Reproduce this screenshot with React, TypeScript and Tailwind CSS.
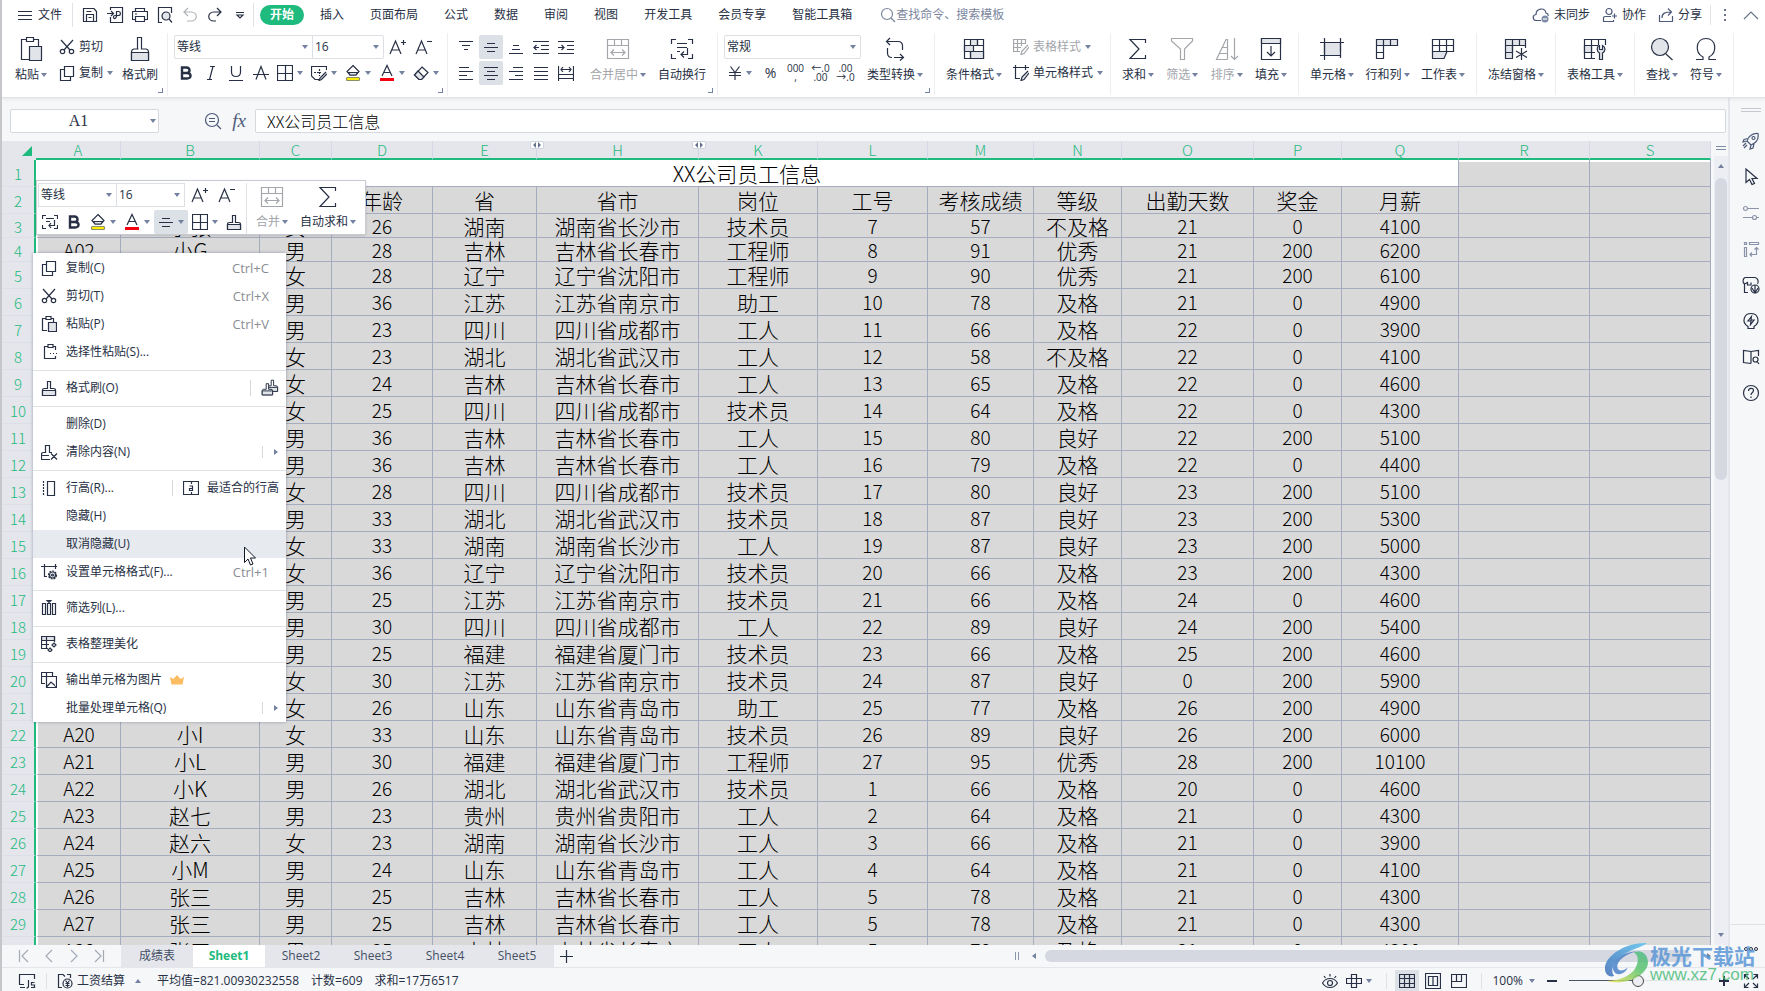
import type { ReactNode } from 'react';
import clsx from 'clsx';

const SHADE = '#e1e4e9';

type Glyph = { w: number; h: number; d: ReactNode };

const brush = (
  <>
    <path d="M6.5 8.5H3.5Q1.5 8.5 1.5 10.5V15.5H14.5V10.5Q14.5 8.5 12.5 8.5H9.5V1.5H6.5Z" fill="#fff" />
    <path d="M1.5 10.5H14.5V15.5H1.5Z" fill={SHADE} />
  </>
);

const glyphs: Record<string, Glyph> = {
  menu: { w: 14, h: 16, d: <path d="M0 4.5H14M0 8.5H14M0 12.5H14" /> },
  save: { w: 16, h: 16, d: <path d="M1.5 1.5H12L14.5 4.5V14.5H1.5ZM4.5 14.5V7.5H11.5V14.5M4.5 4.5H9.5M6.5 10.5H9.5" /> },
  pdf: { w: 18, h: 16, d: <path d="M4.5 3V.5H16.5V15.5H4.5V10M1 6.5H7M5 4L7.5 6.5L5 9M10.5 10V4.5H12.5C15 4.5 15 8.5 12.5 8.5H9C7 8.5 7 12 9 11.5C10 11 10.5 10 10.5 8" /> },
  print: { w: 16, h: 16, d: <path d="M3.5 4.5V1.5H12.5V4.5M3.5 12.5H.5V4.5H15.5V12.5H12.5M3.5 9.5H12.5V14.5H3.5ZM3 7H5" /> },
  preview: { w: 16, h: 16, d: <><path d="M5 15.5H1.5V.5H14.5V6" /><circle cx="9" cy="9" r="4" fill={SHADE} /><path d="M12 12L15 15.5" /></> },
  undo: { w: 16, h: 16, d: <path d="M6 1L2 5L6 9M2 5H9C16 5 16 14 9 14H5" /> },
  redo: { w: 16, h: 16, d: <path d="M10 1L14 5L10 9M14 5H7C0 5 0 14 7 14H9" /> },
  more: { w: 10, h: 10, d: <path d="M1 2.5H9M2 5L5 8L8 5Z" /> },
  search: { w: 16, h: 16, d: <><circle cx="7" cy="7" r="5.5" /><path d="M11 11L15 15" /></> },
  cloud: { w: 18, h: 16, d: <><path d="M9 13.5H4.5C.5 13.5 0 8 4 7.5C4 1 13 0 14 6C16 6.5 16.5 8 16 9" /><circle cx="13" cy="12" r="3.5" fill="#7e8ba6" stroke="none" /><path d="M11 12H15" stroke="#fff" /></> },
  people: { w: 16, h: 16, d: <><circle cx="7" cy="4.5" r="3" /><path d="M9 9.5H3.5Q1.5 9.5 1.5 11.5V14.5H11.5V13M12.5 6.5V11.5M10 9H15" /></> },
  share: { w: 16, h: 16, d: <path d="M1.5 8V14.5H14.5V9M4 11C4 6 7 5 13.5 5M10 1.5L13.5 5L10 8.5" /> },
  dots: { w: 4, h: 14, d: <path d="M2 1V3M2 6V8M2 11V13" strokeWidth="2" /> },
  collapse: { w: 16, h: 10, d: <path d="M1 9L8 2L15 9" /> },
  paste: { w: 24, h: 26, d: <><path d="M8 3.5H2.5V23.5H10M15 3.5H19.5V10M7.5 1.5H14.5V5.5H7.5Z" /><path d="M10.5 10.5H22.5V24.5H10.5Z" fill={SHADE} /></> },
  cut: { w: 16, h: 16, d: <><circle cx="3.5" cy="12.5" r="2.2" /><circle cx="12.5" cy="12.5" r="2.2" /><path d="M2 1L11 11M14 1L5 11" /></> },
  copy: { w: 16, h: 16, d: <path d="M6 4.5H1.5V15.5H11.5V11.5M5.5 1.5H14.5V11.5H5.5Z" /> },
  brushBig: { w: 20, h: 26, d: <><path d="M8.5 13H4Q1.5 13.5 1.5 16V24.5H18.5V16Q18.5 13.5 16 13H11.5V1.5H7.5V13" /><path d="M1.5 16.5H18.5V24.5H1.5Z" fill={SHADE} /></> },
  grow: { w: 18, h: 18, d: <path d="M1 16L6.5 3L12 16M3 12H10.5M12 4.5H17M14.5 2V7" /> },
  shrink: { w: 18, h: 18, d: <path d="M1 16L6.5 3L12 16M3 12H10.5M12 3.5H17" /> },
  bold: { w: 16, h: 16, d: <path d="M4 2.5V13.5H9C14 13.5 13.5 8 9 8H4H8.5C12.5 8 12.5 2.5 8.5 2.5Z" strokeWidth="2.4" /> },
  italic: { w: 16, h: 16, d: <path d="M7 1.5H12M4 14.5H9M10 1.5L6.5 14.5" /> },
  underline: { w: 16, h: 16, d: <path d="M3.5 1V7C3.5 13 12.5 13 12.5 7V1M1 15.5H15" /> },
  strike: { w: 16, h: 16, d: <path d="M3 14.5L8 1.5L13 14.5M0 9.5H16" /> },
  borders: { w: 16, h: 16, d: <path d="M.5 .5H15.5V15.5H.5ZM8.5 .5V15.5M.5 8.5H15.5" /> },
  drawBorder: { w: 16, h: 16, d: <><path d="M9 14.5H4L.5 11V1.5H15.5V5" /><path d="M8.5 4V11M3 7.5H10" strokeDasharray="2 1" /><path d="M15 7L9 13L8 15.5L10.5 14.5L16 9" fill={SHADE} /></> },
  fill: { w: 16, h: 18, d: <><path d="M8 1.5L14 7.5L11 11H5L2 7.5Z" /><path d="M3.5 8.5H12.5L11 11H5Z" fill={SHADE} /><rect x="1.5" y="13.5" width="13" height="3" rx="1" fill="#ffee00" stroke="#8c8f66" /></> },
  fontColor: { w: 16, h: 18, d: <><path d="M3 12L8 1.5L13 12M5 8.5H11" /><path d="M1 15.5H15" stroke="#f5000f" strokeWidth="3" /></> },
  eraser: { w: 16, h: 16, d: <><path d="M9 2L15 7.5L8.5 14.5H6L1.5 10Z" /><path d="M5 6L11 12L8.5 14.5H6L1.5 10Z" fill={SHADE} /></> },
  alignTop: { w: 16, h: 16, d: <path d="M1 2.5H15M4 6.5H12M6 10.5H10" /> },
  alignMid: { w: 16, h: 16, d: <path d="M4 4.5H12M1 8.5H15M4 12.5H12" /> },
  alignBot: { w: 16, h: 16, d: <path d="M5 6.5H11M4 10.5H12M1 14.5H15" /> },
  outdent: { w: 16, h: 16, d: <path d="M0 2.5H16M8 6.5H16M8 10.5H16M0 14.5H16M6 8.5H1M3.5 6L1 8.5L3.5 11" /> },
  indent: { w: 16, h: 16, d: <path d="M0 2.5H16M9 6.5H16M9 10.5H16M0 14.5H16M0 8.5H6M3.5 6L6 8.5L3.5 11" /> },
  left: { w: 16, h: 16, d: <path d="M1 2.5H11M1 6.5H15M1 10.5H9M1 14.5H15" /> },
  center: { w: 16, h: 16, d: <path d="M1 2.5H15M4 6.5H12M1 10.5H15M4 14.5H12" /> },
  right: { w: 16, h: 16, d: <path d="M5 2.5H15M1 6.5H15M7 10.5H15M1 14.5H15" /> },
  justify: { w: 16, h: 16, d: <path d="M1 2.5H15M1 6.5H15M1 10.5H15M1 14.5H15" /> },
  distribute: { w: 16, h: 16, d: <path d="M.5 1V16M15.5 1V16M3 4.5H13M5 2L3 4.5L5 7M11 2L13 4.5L11 7M1 9.5H15M1 13.5H15" /> },
  merge: { w: 24, h: 22, d: <path d="M1.5 1.5H22.5V20.5H1.5ZM1.5 7.5H22.5M8.5 1.5V7.5M15.5 1.5V7.5M5 14.5H19M8 11.5L5 14.5L8 17.5M16 11.5L19 14.5L16 17.5" /> },
  wrap: { w: 24, h: 22, d: <path d="M6 1.5H1.5V6M18 1.5H22.5V6M6 20.5H1.5V16M18 20.5H22.5V16M7 5.5H17M7 9.5H17M7 13.5H10M17.5 10V16.5H11M14 13.5L11 16.5L14 19.5" /> },
  wrapSmall: { w: 16, h: 16, d: <path d="M4 1.5H.5V5M12 1.5H15.5V5M4 14.5H.5V11M12 14.5H15.5V11M4 4.5H12M4 7.5H8M12.5 6V11.5H7M9 9L7 11.5L9 14" /> },
  yen: { w: 14, h: 16, d: <path d="M2.5 1.5L7 7.5L11.5 1.5M1 7.5H13M1 10.5H13M7 7.5V15" /> },
  convert: { w: 20, h: 24, d: <path d="M7 20.5Q2.5 20.5 2.5 16V11M5 1L1.5 4.5L5 8M1.5 4.5H13Q17.5 4.5 17.5 9V13M15 17L18.5 20.5L15 23.5M18.5 20.5H9" /> },
  condition: { w: 22, h: 22, d: <><path d="M1.5 1.5H20.5V20.5H1.5Z" /><path d="M7.5 1.5H14.5V7.5H7.5ZM1.5 7.5H10.5V13.5H1.5ZM7.5 13.5H20.5V20.5H7.5Z" fill={SHADE} /><path d="M1.5 7.5H20.5M1.5 13.5H20.5M7.5 13.5V20.5M14.5 1.5V7.5" /></> },
  tableStyle: { w: 16, h: 16, d: <path d="M7 12.5H.5V.5H12.5V5M.5 4.5H12.5M.5 8.5H8M4.5 .5V12.5M8.5 .5V7M15 6L9 12L8 15.5L11 14.5L16 8" /> },
  cellStyle: { w: 16, h: 16, d: <><path d="M2.5 0V13.5H7M0 2.5H16M12.5 0V5" /><path d="M15 6L9 12L8 15.5L11 14.5L16 8" fill={SHADE} /></> },
  sum: { w: 20, h: 22, d: <path d="M17.5 5V1.5H2L11 11L2 20.5H17.5V17" /> },
  filter: { w: 24, h: 24, d: <path d="M1.5 1.5H22.5V4L14.5 12V22.5H10.5V12L1.5 4Z" /> },
  sort: { w: 24, h: 24, d: <path d="M12.5 22.5H1.5L11 2.5H12.5V22.5M4 16.5H12M7 10.5H12M19.5 1V22.5M16 19L19.5 22.5L23 19" /> },
  fillDown: { w: 22, h: 24, d: <><path d="M1.5 1.5H20.5V22.5H1.5Z" /><path d="M1.5 1.5H20.5V6.5H1.5Z" fill={SHADE} /><path d="M11 9V19M7 15L11 19L15 15" /></> },
  cell: { w: 24, h: 22, d: <><path d="M4.5 4.5H20.5V17.5H4.5Z" fill={SHADE} /><path d="M4.5 0V22M20.5 0V14M20.5 17V20M0 4.5H24M0 17.5H17" /></> },
  rowCol: { w: 24, h: 22, d: <><path d="M1.5 1.5H22.5V7.5H1.5Z" fill={SHADE} /><path d="M1.5 7.5V20.5H8.5V1.5M15.5 1.5V7.5M1.5 14.5H8.5" /></> },
  sheet: { w: 24, h: 22, d: <><path d="M1.5 1.5H22.5V13.5H1.5ZM1.5 7.5H22.5M8.5 1.5V13.5M15.5 1.5V13.5" /><path d="M1.5 13.5H16L13 20.5H1.5Z" fill={SHADE} /></> },
  freeze: { w: 24, h: 22, d: <><path d="M1.5 1.5H21.5V7.5H1.5ZM1.5 7.5H8.5V20.5H1.5Z" fill={SHADE} /><path d="M8.5 1.5V14M15.5 1.5V7.5M1.5 14.5H8.5M21.5 7.5V10M17.5 10V22M12 13L23 19.5M23 13L12 19.5" /></> },
  tools: { w: 24, h: 22, d: <><path d="M12 20.5H1.5V1.5H22.5V7M1.5 7.5H15M1.5 14.5H12M8.5 1.5V20.5M15.5 1.5V7" /><path d="M1.5 7.5H8.5V14.5H1.5Z" fill={SHADE} /><path d="M16.5 21.5V15C13 13 14 8 16.5 7.5V11.5H19.5V7.5C22.5 9 23 13 19.5 15V21.5Z" fill={SHADE} /></> },
  find: { w: 24, h: 24, d: <><circle cx="10" cy="10" r="8.5" fill={SHADE} /><path d="M16 17L22.5 23" /></> },
  omega: { w: 22, h: 24, d: <path d="M1 22.5H8V20C-1 15 1 1.5 11 1.5S23 15 14 20V22.5H21" /> },
  zoomFx: { w: 18, h: 18, d: <><circle cx="8" cy="8" r="6.5" /><path d="M13 13L17 17M5 6.5H11M5 9.5H11" /></> },
  rocket: { w: 18, h: 18, d: <><path d="M5 9C6 4 11 1 16 1.5C17 7 14 11 9 13L5 9ZM6 6.5L2 7.5L1 10L5 9M9 13L8 17L11 16L12 11.5M4 11L1 14M5 13L2 16" /><circle cx="11.5" cy="6" r="1.5" /></> },
  arrow: { w: 18, h: 18, d: <path d="M4 1V14.5L7.5 11.5L10 16.5L12.5 15.5L10 10.5H15Z" /> },
  sliders: { w: 18, h: 18, d: <><circle cx="3.5" cy="4.5" r="2" /><circle cx="12.5" cy="13.5" r="2" /><path d="M5.5 4.5H17M1 13.5H10.5M14.5 13.5H17" /></> },
  transform: { w: 18, h: 18, d: <path d="M2.5 2.5H4.5V4.5H2.5ZM7.5 2.5H16.5V4.5H7.5ZM2.5 7.5H4.5V16.5H2.5ZM14.5 7.5V14.5H8M12.5 9.5L14.5 7.5L16.5 9.5M10 12.5L8 14.5L10 16.5" /> },
  docStore: { w: 18, h: 18, d: <><path d="M6 16.5H2.5V8C0 6 1 2.5 3 1.5H13C16 2 17 6 15.5 8M2.5 8L5.5 6.5V9H9V6.5" /><circle cx="13" cy="13" r="4" /><path d="M13 9V17M13 17L10 12M13 17L16 12" /></> },
  bulb: { w: 18, h: 18, d: <path d="M6 16.5V14.5C-1 10 2 1.5 9 1.5S19 10 12 14.5V16.5ZM9.5 4.5L6 9H9L8.5 12.5L12 8H9Z" /> },
  book: { w: 18, h: 18, d: <><path d="M9 15.5L1.5 14.5V2.5L9 3.5L16.5 2.5V8M9 3.5V15.5" /><circle cx="13.5" cy="11.5" r="2.5" /><path d="M15 13.5L17 16" /></> },
  help: { w: 18, h: 18, d: <><circle cx="9" cy="9" r="7.5" /><path d="M6.5 7C6.5 3.5 11.5 3.5 11.5 6.5C11.5 8.5 9 8.5 9 11M9 12.5V14" /></> },
  pasteSmall: { w: 16, h: 16, d: <><path d="M5 2.5H1.5V14.5H6M10 2.5H12.5V6M5 .5H10V3.5H5Z" /><path d="M7.5 6.5H15.5V15.5H7.5Z" fill={SHADE} /></> },
  pasteSpecial: { w: 16, h: 16, d: <path d="M7 2.5H3.5V14.5H14.5V12M12 2.5H14.5V6M7 .5H12V3.5H7ZM9 9.5H10M12 9.5H13M15 9.5H16" /> },
  brush: { w: 16, h: 16, d: brush },
  brushes: { w: 18, h: 18, d: <><g transform="translate(5 0) scale(.8)">{brush}</g><g transform="translate(0 3.5) scale(.8)">{brush}</g></> },
  clear: { w: 17, h: 16, d: <path d="M9 15.5H.5V10.5Q.5 8.5 2.5 8.5H4.5V1.5H8.5V8.5H11M.5 11.5H8M10 9.5L16 15.5M16 9.5L10 15.5" /> },
  rowHeight: { w: 16, h: 16, d: <><path d="M6.5 1.5H13.5V15.5H6.5Z" /><path d="M2.5 1V16" strokeDasharray="2 1" /></> },
  fitHeight: { w: 16, h: 16, d: <path d="M.5 1.5H15.5V14.5H.5ZM8.5 1.5V4M8.5 12V14.5M6.5 6H9.5V10.5H6.5V8.5H9.5" /> },
  cellFormat: { w: 17, h: 16, d: <><path d="M3.5 0V12.5H6M0 2.5H16M14.5 0V5" /><circle cx="11.5" cy="11" r="4" strokeDasharray="2 1" /><circle cx="11.5" cy="11" r="3" /><circle cx="11.5" cy="11" r="1" /></> },
  filterCol: { w: 16, h: 16, d: <path d="M1.5 3.5H4.5V14.5H1.5ZM6.5 3.5H9.5V14.5H6.5ZM11.5 3.5H14.5V14.5H11.5ZM6 .5H10L8 2.5Z" /> },
  beautify: { w: 16, h: 16, d: <><path d="M.5 .5H13.5V4.5H.5Z" fill={SHADE} /><path d="M7 12.5H.5V.5H13.5V6M.5 8.5H8M5.5 1V12M13 7L15 9L13 11L11 9ZM9 12L11 14L9 16L7 14Z" /></> },
  exportImg: { w: 16, h: 16, d: <><path d="M4 11.5H.5V.5H11.5V4M.5 4.5H5M5.5 .5V4" /><path d="M5.5 4.5H15.5V15.5H5.5ZM5.5 15L10 10L15.5 15" /></> },
  crown: { w: 14, h: 10, d: <path d="M0 2L3.5 4L7 0L10.5 4L14 2L12.5 9.5H1.5Z" fill="#fdbb62" stroke="none" /> },
  first: { w: 12, h: 14, d: <path d="M1.5 1V13M10 1L4 7L10 13" /> },
  prev: { w: 12, h: 14, d: <path d="M9 1L3 7L9 13" /> },
  next: { w: 12, h: 14, d: <path d="M3 1L9 7L3 13" /> },
  last: { w: 12, h: 14, d: <path d="M2 1L8 7L2 13M10.5 1V13" /> },
  plus: { w: 14, h: 14, d: <path d="M7.5 1V14M1 7.5H14" /> },
  macro: { w: 18, h: 16, d: <path d="M6 11.5H1.5V1.5H16.5V6M2 14.5H7M10.5 7V13Q10.5 15 8.5 15M16.5 9.5H13.5V12H16.5V14.5H13" /> },
  payroll: { w: 16, h: 16, d: <><path d="M5 14.5H1.5V1.5H6L8 3.5M10 1.5H13.5V5" /><circle cx="10.5" cy="10.5" r="4.5" /><path d="M8.5 7.5L10.5 10L12.5 7.5M8.5 10.5H12.5M8.5 12.5H12.5M10.5 10V14" /></> },
  eye: { w: 16, h: 16, d: <><path d="M.5 10C4 4 12 4 15.5 10C12 16 4 16 .5 10ZM2 3L3.5 5M8 1V3.5M14 3L12.5 5" /><circle cx="8" cy="10" r="2.5" /></> },
  cross: { w: 16, h: 16, d: <path d="M5.5 1.5H10.5V14.5H5.5ZM.5 5.5H15.5V10.5H.5Z" /> },
  viewGrid: { w: 16, h: 16, d: <path d="M.5 1.5H15.5V14.5H.5ZM.5 5.5H15.5M.5 10.5H15.5M5.5 1.5V14.5M10.5 1.5V14.5" /> },
  viewPage: { w: 16, h: 16, d: <path d="M.5 .5H15.5V15.5H.5ZM3.5 3.5H12.5V12.5H3.5ZM8 3.5V12.5" /> },
  viewBreak: { w: 16, h: 16, d: <path d="M.5 1.5H15.5V14.5H.5ZM5.5 1.5V8.5H10.5V1.5M.5 8.5H10" /> },
  fullscreen: { w: 16, h: 16, d: <path d="M10 6L14.5 1.5M10.5 1.5H14.5V5.5M6 10L1.5 14.5M1.5 10.5V14.5H5.5M6 6L1.5 1.5M1.5 5.5V1.5H5.5M10 10L14.5 14.5M10.5 14.5H14.5V10.5" /> },
};

const Icon = ({ name, className }: { name: string; className?: string }) => {
  const g = glyphs[name];
  return (
    <svg
      width={g.w}
      height={g.h}
      viewBox={`0 0 ${g.w} ${g.h}`}
      fill="none"
      stroke="currentColor"
      strokeWidth="1.2"
      aria-hidden
      className={clsx('shrink-0', className)}
    >
      {g.d}
    </svg>
  );
};

const Caret = ({ className }: { className?: string }) => (
  <svg width="6" height="4" viewBox="0 0 6 4" aria-hidden className={clsx('shrink-0', className)}>
    <path d="M0 0H6L3 4Z" fill="#7382a0" />
  </svg>
);

type ButtonProps = { icon: string; label: string; caret?: boolean; muted?: boolean };

const BigButton = ({ icon, label, caret, muted }: ButtonProps) => (
  <button type="button" className={clsx('flex shrink-0 flex-col items-center', muted && 'text-[#a3a6ab]')}>
    <span className="flex h-7 items-center">
      <Icon name={icon} />
    </span>
    <span className="flex h-6 items-center gap-0.5 whitespace-nowrap">
      {label}
      {caret && <Caret />}
    </span>
  </button>
);

const SmallButton = ({ icon, label, caret, muted }: ButtonProps) => (
  <button type="button" className={clsx('flex h-6 items-center gap-1 whitespace-nowrap', muted && 'text-[#a3a6ab]')}>
    <Icon name={icon} />
    {label}
    {caret && <Caret />}
  </button>
);

const ToolButton = ({ icon, label, caret, on }: { icon: string; label: string; caret?: boolean; on?: boolean }) => (
  <button
    type="button"
    aria-label={label}
    className={clsx(
      'flex h-6 shrink-0 items-center rounded-xs',
      caret ? 'w-[34px] gap-1 pl-1' : 'w-6 justify-center',
      on && 'bg-[#dce1e7]',
    )}
  >
    <Icon name={icon} />
    {caret && <Caret />}
  </button>
);

const Picker = ({ value, label, className }: { value: string; label: string; className: string }) => (
  <span className={clsx('relative flex h-6 items-center', className)}>
    <select aria-label={label} defaultValue={value} className="h-full w-full appearance-none bg-transparent pl-0.5 outline-none">
      <option>{value}</option>
    </select>
    <Caret className="pointer-events-none absolute right-1" />
  </span>
);

const Group = ({ children, className, corner }: { children: ReactNode; className: string; corner?: boolean }) => (
  <div className={clsx('relative flex h-[62px] shrink-0 border-r border-[#eceef1] pt-0.5', className)}>
    {children}
    {corner && <span className="absolute right-1 bottom-0.5 size-[5px] border-r border-b border-[#7382a0]" />}
  </div>
);

const TopBar = () => (
  <header className="flex h-[29px] items-center pl-4">
    <button type="button" className="flex items-center gap-1.5">
      <Icon name="menu" />
      文件
    </button>
    <span className="mr-1 ml-2.5 h-6 w-px bg-[#dfe2e6]" />
    {[
      ['save', '保存'],
      ['pdf', '输出为PDF'],
      ['print', '打印'],
      ['preview', '打印预览'],
      ['undo', '撤销'],
      ['redo', '恢复'],
      ['more', '自定义快速访问工具栏'],
    ].map(([icon, label]) => (
      <button key={icon} type="button" aria-label={label} className={clsx('flex w-[25px] justify-center', icon === 'undo' && 'text-[#b0b3b8]')}>
        <Icon name={icon} />
      </button>
    ))}
    <span className="mr-1.5 ml-px h-6 w-px bg-[#dfe2e6]" />
    <button type="button" className="h-5 rounded-full bg-[#1fba7e] px-2.5 font-bold text-white">开始</button>
    <nav className="flex gap-[26px] pl-4 whitespace-nowrap">
      {['插入', '页面布局', '公式', '数据', '审阅', '视图', '开发工具', '会员专享', '智能工具箱'].map(tab => (
        <button key={tab} type="button">{tab}</button>
      ))}
    </nav>
    <label className="ml-7 flex items-center text-[#7b869e]">
      <Icon name="search" />
      <input aria-label="查找命令" placeholder="查找命令、搜索模板" className="w-32 outline-none placeholder:text-[#7b869e]" />
    </label>
    <div className="ml-auto flex items-center gap-3 pr-1.5 whitespace-nowrap">
      <button type="button" className="flex items-center gap-1">
        <Icon name="cloud" className="text-[#4c5a78]" />
        未同步
      </button>
      <button type="button" className="flex items-center gap-1">
        <Icon name="people" className="text-[#4c5a78]" />
        协作
      </button>
      <button type="button" className="flex items-center gap-1">
        <Icon name="share" className="text-[#4c5a78]" />
        分享
      </button>
      <span className="-ml-1 h-5 w-px bg-[#dfe2e6]" />
      <button type="button" aria-label="更多" className="text-[#6b7488]"><Icon name="dots" /></button>
      <button type="button" aria-label="折叠功能区" className="pl-1 text-[#6b7488]"><Icon name="collapse" /></button>
    </div>
  </header>
);

const decimalButton = (label: string, top: string, bottom: string) => (
  <button
    type="button"
    aria-label={label}
    className="flex h-6 w-[25px] flex-col items-center justify-center text-[10px] leading-[9px]"
  >
    <span>{top}</span>
    <span>{bottom}</span>
  </button>
);

const Ribbon = () => (
  <div className="flex pt-1 pb-0.5">
    <Group className="w-[166px] gap-2 pl-[13px]" corner>
      <BigButton icon="paste" label="粘贴" caret />
      <div className="ml-1 flex w-[55px] flex-col gap-0.5">
        <SmallButton icon="cut" label="剪切" />
        <SmallButton icon="copy" label="复制" caret />
      </div>
      <BigButton icon="brushBig" label="格式刷" />
    </Group>
    <Group className="w-[280px] flex-col gap-0.5 pl-1.5" corner>
      <div className="flex gap-0.5">
        <div className="flex rounded-xs border border-[#dcdfe4]">
          <Picker label="字体" value="等线" className="-my-px w-[138px] border-r border-[#dcdfe4]" />
          <Picker label="字号" value="16" className="-my-px w-[70px]" />
        </div>
        <ToolButton icon="grow" label="增大字号" />
        <ToolButton icon="shrink" label="减小字号" />
      </div>
      <div className="flex">
        <div className="flex gap-px">
          <ToolButton icon="bold" label="加粗" />
          <ToolButton icon="italic" label="倾斜" />
          <ToolButton icon="underline" label="下划线" />
          <ToolButton icon="strike" label="删除线" />
        </div>
        <ToolButton icon="borders" label="边框" caret />
        <ToolButton icon="drawBorder" label="绘图边框" caret />
        <ToolButton icon="fill" label="填充颜色" caret />
        <ToolButton icon="fontColor" label="字体颜色" caret />
        <ToolButton icon="eraser" label="清除" caret />
      </div>
    </Group>
    <Group className="w-[270px] gap-3 pl-1.5" corner>
      <div className="flex flex-col gap-0.5">
        <div className="flex gap-px">
          <ToolButton icon="alignTop" label="顶端对齐" />
          <ToolButton icon="alignMid" label="垂直居中" on />
          <ToolButton icon="alignBot" label="底端对齐" />
          <ToolButton icon="outdent" label="减少缩进" />
          <ToolButton icon="indent" label="增加缩进" />
        </div>
        <div className="flex gap-px">
          <ToolButton icon="left" label="左对齐" />
          <ToolButton icon="center" label="水平居中" on />
          <ToolButton icon="right" label="右对齐" />
          <ToolButton icon="justify" label="两端对齐" />
          <ToolButton icon="distribute" label="分散对齐" />
        </div>
      </div>
      <BigButton icon="merge" label="合并居中" caret muted />
      <BigButton icon="wrap" label="自动换行" />
    </Group>
    <Group className="w-[217px] gap-1.5 pl-1.5" corner>
      <div className="flex flex-col gap-0.5">
        <Picker label="数字格式" value="常规" className="w-[137px] rounded-xs border border-[#dcdfe4]" />
        <div className="flex">
          <ToolButton icon="yen" label="货币" caret />
          <button type="button" aria-label="百分比" className="h-6 w-[25px] text-sm">%</button>
          {decimalButton('千位分隔', '000', ',')}
          {decimalButton('增加小数位', '←.0', '.00')}
          {decimalButton('减少小数位', '.00', '→.0')}
        </div>
      </div>
      <BigButton icon="convert" label="类型转换" caret />
    </Group>
    <Group className="w-[176px] gap-[11px] pl-[11px]">
      <BigButton icon="condition" label="条件格式" caret />
      <div className="flex flex-col gap-0.5">
        <SmallButton icon="tableStyle" label="表格样式" caret muted />
        <SmallButton icon="cellStyle" label="单元格样式" caret />
      </div>
    </Group>
    <Group className="w-[188px] justify-between px-[11px]">
      <BigButton icon="sum" label="求和" caret />
      <BigButton icon="filter" label="筛选" caret muted />
      <BigButton icon="sort" label="排序" caret muted />
      <BigButton icon="fillDown" label="填充" caret />
    </Group>
    <Group className="w-[178px] justify-between px-[11px]">
      <BigButton icon="cell" label="单元格" caret />
      <BigButton icon="rowCol" label="行和列" caret />
      <BigButton icon="sheet" label="工作表" caret />
    </Group>
    <Group className="w-[79px] px-[11px]">
      <BigButton icon="freeze" label="冻结窗格" caret />
    </Group>
    <Group className="w-[79px] px-[11px]">
      <BigButton icon="tools" label="表格工具" caret />
    </Group>
    <Group className="w-[99px] justify-between px-[11px]">
      <BigButton icon="find" label="查找" caret />
      <BigButton icon="omega" label="符号" caret />
    </Group>
  </div>
);

const FormulaBar = () => (
  <div className="flex h-[43px] shrink-0 items-center pt-[3px] pr-0.5 pl-2">
    <div className="relative flex h-6 w-[149px] items-center rounded-xs border border-[#d5d8dd] bg-white">
      <input aria-label="名称框" defaultValue="A1" className="w-full pr-3 text-center font-['Liberation_Serif',serif] text-[16px] outline-none" />
      <Caret className="absolute right-0.5" />
    </div>
    <button type="button" aria-label="查看公式" className="ml-[45px] text-[#4c5a78]"><Icon name="zoomFx" /></button>
    <button type="button" aria-label="插入函数" className="ml-2 w-[18px] font-['Liberation_Serif',serif] text-[19px] leading-6 text-[#4c5a78] italic">fx</button>
    <input
      aria-label="编辑栏"
      defaultValue="XX公司员工信息"
      className="ml-[7px] h-6 flex-1 rounded-xs border border-[#d5d8dd] bg-white pl-[11px] font-['Noto_Sans_CJK_SC',sans-serif] text-[16px] font-light text-black outline-none"
    />
  </div>
);

const columns = [
  { id: 'A', w: 'w-[85px]' },
  { id: 'B', w: 'w-[139px]' },
  { id: 'C', w: 'w-[72px]' },
  { id: 'D', w: 'w-[101px]' },
  { id: 'E', w: 'w-[104px]', hidden: true },
  { id: 'H', w: 'w-[162px]', hidden: true },
  { id: 'K', w: 'w-[119px]' },
  { id: 'L', w: 'w-[110px]' },
  { id: 'M', w: 'w-[106px]' },
  { id: 'N', w: 'w-[88px]' },
  { id: 'O', w: 'w-[132px]' },
  { id: 'P', w: 'w-[88px]' },
  { id: 'Q', w: 'w-[117px]' },
  { id: 'R', w: 'w-[131px]' },
  { id: 'S', w: '' },
];

const titles = ['编号', '姓名', '性别', '年龄', '省', '省市', '岗位', '工号', '考核成绩', '等级', '出勤天数', '奖金', '月薪'];

const records = [
  '小张|女|26|湖南|长沙|技术员|7|57|不及格|21|0|4100',
  '小G|男|28|吉林|长春|工程师|8|91|优秀|21|200|6200',
  '|女|28|辽宁|沈阳|工程师|9|90|优秀|21|200|6100',
  '|男|36|江苏|南京|助工|10|78|及格|21|0|4900',
  '|男|23|四川|成都|工人|11|66|及格|22|0|3900',
  '|女|23|湖北|武汉|工人|12|58|不及格|22|0|4100',
  '|女|24|吉林|长春|工人|13|65|及格|22|0|4600',
  '|女|25|四川|成都|技术员|14|64|及格|22|0|4300',
  '|男|36|吉林|长春|工人|15|80|良好|22|200|5100',
  '|男|36|吉林|长春|工人|16|79|及格|22|0|4400',
  '|女|28|四川|成都|技术员|17|80|良好|23|200|5100',
  '|男|33|湖北|武汉|技术员|18|87|良好|23|200|5300',
  '|女|33|湖南|长沙|工人|19|87|良好|23|200|5000',
  '|女|36|辽宁|沈阳|技术员|20|66|及格|23|200|4300',
  '|男|25|江苏|南京|技术员|21|66|及格|24|0|4600',
  '|男|30|四川|成都|工人|22|89|良好|24|200|5400',
  '|男|25|福建|厦门|技术员|23|66|及格|25|200|4600',
  '|女|30|江苏|南京|技术员|24|87|良好|0|200|5900',
  '|女|26|山东|青岛|助工|25|77|及格|26|200|4900',
  '小I|女|33|山东|青岛|技术员|26|89|良好|26|200|6000',
  '小L|男|30|福建|厦门|工程师|27|95|优秀|28|200|10100',
  '小K|男|26|湖北|武汉|技术员|1|66|及格|20|0|4600',
  '赵七|男|23|贵州|贵阳|工人|2|64|及格|21|0|4300',
  '赵六|女|23|湖南|长沙|工人|3|66|及格|21|0|3900',
  '小M|男|24|山东|青岛|工人|4|64|及格|21|0|4100',
  '张三|男|25|吉林|长春|工人|5|78|及格|21|0|4300',
  '张三|男|25|吉林|长春|工人|5|78|及格|21|0|4300',
  '张三|男|35|吉林|长春|工人|5|78|及格|21|0|4300',
];

const rows = records.map((record, i) => {
  const cells = record.split('|');
  cells[4] = `${cells[3]}省${cells[4]}市`;
  return [`A${String(i + 1).padStart(2, '0')}`, ...cells];
});

const isLatin = (text: string) => /^[A-Z0-9]+$/.test(text);

const RowHeader = ({ n }: { n: number }) => (
  <th scope="row" className="border-r-2 border-b border-r-[#1fba7e] border-b-[#dcdfe8] bg-[#e4e6ec] p-0 pt-0.5 text-[15px] leading-5 font-light text-[#1fba7e]">
    {n}
  </th>
);

const cellClass = 'border-r border-b border-[#a4acbe] bg-[#d9d9d9] p-0 whitespace-nowrap leading-5';

const Grid = () => (
  <div className="min-w-0 flex-1 overflow-hidden font-['Noto_Sans_CJK_SC',sans-serif]">
    <table className="w-full table-fixed border-separate border-spacing-0 text-center font-light text-black">
      <thead>
        <tr className="h-[19px] bg-[#e4e6ec] text-[15px] leading-4 text-[#1fba7e]">
          <th className="w-[34px] p-0">
            <svg width="10" height="10" viewBox="0 0 10 10" aria-hidden className="ml-5">
              <path d="M10 0V10H0Z" fill="#1fba7e" />
            </svg>
          </th>
          {columns.map(col => (
            <th key={col.id} className={clsx('relative border-r border-b-2 border-r-[#d5d9e6] border-b-[#1fba7e] p-0 pt-px font-light', col.w)}>
              {col.id}
              {col.hidden && (
                <span className="absolute top-0 -right-2 z-10 flex h-2 w-3.5 items-center justify-center rounded-xs border border-[#d0d4de] bg-white">
                  <svg width="10" height="6" viewBox="0 0 10 6" aria-hidden>
                    <path d="M4 0V6L1 3ZM6 0V6L9 3Z" fill="#66728c" />
                  </svg>
                </span>
              )}
            </th>
          ))}
        </tr>
      </thead>
      <tbody>
        <tr className="h-[27px]">
          <RowHeader n={1} />
          <td colSpan={13} className="border-r border-b border-[#a4acbe] bg-white p-0 text-[21px] leading-5">XX公司员工信息</td>
          <td className={clsx(cellClass, 'shadow-[inset_0_2px_0_#fff]')} />
          <td className={clsx(cellClass, 'shadow-[inset_0_2px_0_#fff]')} />
        </tr>
        <tr className="h-[27px]">
          <RowHeader n={2} />
          {titles.map(title => <td key={title} className={clsx(cellClass, 'text-[21px]')}>{title}</td>)}
          <td className={cellClass} />
          <td className={cellClass} />
        </tr>
        {rows.map((row, i) => (
          <tr key={row[0]} className={i < 2 ? 'h-6' : 'h-[27px]'}>
            <RowHeader n={i + 3} />
            {row.map((cell, j) => (
              <td
                key={columns[j].id}
                className={clsx(cellClass, isLatin(cell) ? 'text-[19px]' : 'text-[21px]', j === 0 && 'border-l-2 border-l-white')}
              >
                {cell}
              </td>
            ))}
            <td className={cellClass} />
            <td className={cellClass} />
          </tr>
        ))}
      </tbody>
    </table>
  </div>
);

const VerticalScroll = () => (
  <div className="ml-[3px] flex w-3.5 flex-col items-center">
    <span className="mt-[5px] mb-1.5 h-1 w-2.5 border-y border-[#7e8ba6]" />
    <div className="flex w-full flex-1 flex-col items-center bg-[#eceef3] pt-2 pb-2">
      <Caret className="rotate-180" />
      <span className="mt-2.5 h-[302px] w-3 rounded-full bg-[#d5d8e1]" />
      <Caret className="mt-auto" />
    </div>
  </div>
);

const SheetBar = () => (
  <div className="flex h-[22px] shrink-0 items-center">
    <div className="flex w-[119px] items-center justify-between px-4 text-[#a5aab5]">
      {[
        ['first', '第一个'],
        ['prev', '上一个'],
        ['next', '下一个'],
        ['last', '最后一个'],
      ].map(([icon, label]) => (
        <button key={icon} type="button" aria-label={label}><Icon name={icon} /></button>
      ))}
    </div>
    <div className="flex h-full bg-[#e4e6ec] pr-px text-[#454f66]">
      {['成绩表', 'Sheet1', 'Sheet2', 'Sheet3', 'Sheet4', 'Sheet5'].map(name => (
        <button
          key={name}
          type="button"
          className={clsx('h-full w-[72px]', name === 'Sheet1' && 'bg-white font-bold text-[#1fba7e]')}
        >
          {name}
        </button>
      ))}
    </div>
    <button type="button" aria-label="新建工作表" className="ml-[5px]"><Icon name="plus" /></button>
    <div className="ml-auto flex h-3.5 w-[713px] items-center">
      <span className="h-2 w-1 border-x border-[#8c96ab]" />
      <Caret className="ml-3 rotate-90" />
      <span className="ml-2 h-3 flex-1 rounded-full bg-[#d5d8e1]" />
      <Caret className="mr-4 ml-4 -rotate-90" />
    </div>
  </div>
);

const SideBar = () => (
  <aside className="flex w-[37px] shrink-0 flex-col items-center border-l-2 border-[#e4e6ec]">
    <span className="mt-2.5 ml-1.5 h-1 w-5 border-y border-[#c5c8ce]" />
    <div className="mt-5 ml-1.5 flex flex-col gap-[18px]">
      {[
        ['rocket', '快捷工具', 'text-[#4c5a78]'],
        ['arrow', '选择', ''],
        ['sliders', '属性', 'text-[#8b94a8]'],
        ['transform', '转换', 'text-[#8b94a8]'],
        ['docStore', '资源', ''],
        ['bulb', '推荐', ''],
        ['book', '查阅', ''],
        ['help', '帮助', ''],
      ].map(([icon, label, tone]) => (
        <button key={icon} type="button" aria-label={label} className={tone}><Icon name={icon} /></button>
      ))}
    </div>
    <div className="mt-auto flex h-[43px] w-full items-center justify-center border-t border-[#e0e2e8] pt-1.5 pl-1.5">
      <svg width="16" height="6" viewBox="0 0 16 6" fill="none" stroke="#273044" aria-hidden>
        <circle cx="3" cy="3" r="1.5" />
        <circle cx="8" cy="3" r="1.5" />
        <circle cx="13" cy="3" r="1.5" />
      </svg>
    </div>
  </aside>
);

const StatusBar = () => (
  <footer className="flex h-6 shrink-0 items-center border-t border-[#e4e6ec] pt-0.5 pr-1.5 pl-4 whitespace-nowrap">
    <button type="button" aria-label="宏"><Icon name="macro" /></button>
    <span className="mx-2.5 h-4 w-px bg-[#e0e2e8]" />
    <button type="button" className="flex items-center gap-1">
      <Icon name="payroll" />
      工资结算
      <Caret className="ml-1.5 rotate-180" />
    </button>
    <div className="ml-4 flex gap-3">
      <span>平均值=821.00930232558</span>
      <span>计数=609</span>
      <span>求和=17万6517</span>
    </div>
    <div className="ml-auto flex h-full items-center">
      <button type="button" aria-label="护眼模式"><Icon name="eye" /></button>
      <button type="button" aria-label="阅读模式" className="ml-2 flex items-center gap-1">
        <Icon name="cross" />
        <Caret />
      </button>
      <span className="mr-2 ml-3.5 h-4 w-px bg-[#e0e2e8]" />
      <button type="button" aria-label="普通视图" className="flex h-full w-6 items-center justify-center bg-[#dce1e7]"><Icon name="viewGrid" /></button>
      <button type="button" aria-label="页面布局" className="ml-1.5"><Icon name="viewPage" /></button>
      <button type="button" aria-label="分页预览" className="ml-2.5"><Icon name="viewBreak" /></button>
      <span className="mr-2.5 ml-3.5 h-4 w-px bg-[#e0e2e8]" />
      <button type="button" className="flex items-center gap-1.5">
        100%
        <Caret />
      </button>
      <button type="button" aria-label="缩小" className="ml-3 h-4 w-2.5"><span className="block h-0.5 bg-[#273044]" /></button>
      <input
        type="range"
        aria-label="缩放"
        defaultValue={50}
        className="ml-3 h-3.5 w-[138px] appearance-none bg-[linear-gradient(to_right,#4a5368_50%,#dfe2e6_50%)] bg-[length:100%_1px] bg-center bg-no-repeat [&::-webkit-slider-thumb]:size-3 [&::-webkit-slider-thumb]:appearance-none [&::-webkit-slider-thumb]:rounded-full [&::-webkit-slider-thumb]:border [&::-webkit-slider-thumb]:border-[#4a4a4a] [&::-webkit-slider-thumb]:bg-[#eceef1]"
      />
      <button type="button" aria-label="放大" className="ml-3">
        <svg width="10" height="10" viewBox="0 0 10 10" aria-hidden>
          <path d="M5 0V10M0 5H10" stroke="#273044" strokeWidth="2" />
        </svg>
      </button>
      <button type="button" aria-label="全屏" className="ml-3.5"><Icon name="fullscreen" /></button>
    </div>
  </footer>
);

const MiniToolbar = () => (
  <div className="absolute top-[180px] left-[34px] flex h-[55px] w-[330px] border border-[#c8cbd2] bg-white pt-0.5 pl-px shadow-sm">
    <div className="flex w-[209px] flex-col gap-[3px] border-r border-[#e0e2e8]">
      <div className="flex gap-[3px]">
        <div className="flex border border-[#dcdfe4]">
          <Picker label="浮动字体" value="等线" className="-my-px w-[78px] border-r border-[#dcdfe4]" />
          <Picker label="浮动字号" value="16" className="-my-px w-[67px]" />
        </div>
        <ToolButton icon="grow" label="增大字号" />
        <ToolButton icon="shrink" label="减小字号" />
      </div>
      <div className="flex">
        <ToolButton icon="wrapSmall" label="自动换行" />
        <ToolButton icon="bold" label="加粗" />
        <ToolButton icon="fill" label="填充颜色" caret />
        <ToolButton icon="fontColor" label="字体颜色" caret />
        <ToolButton icon="alignMid" label="居中" caret on />
        <ToolButton icon="borders" label="边框" caret />
        <ToolButton icon="brush" label="格式刷" />
      </div>
    </div>
    <div className="flex gap-3 pl-[9px]">
      <BigButton icon="merge" label="合并" caret muted />
      <BigButton icon="sum" label="自动求和" caret />
    </div>
  </div>
);

type MenuRow = { label: string; icon?: string; keys?: string; extra?: ReactNode; active?: boolean };

const submenuArrow = (
  <span className="ml-auto flex h-3 items-center border-l border-[#d5d8dd] pl-2.5">
    <Caret className="-rotate-90" />
  </span>
);

const menu: MenuRow[][] = [
  [
    { icon: 'copy', label: '复制(C)', keys: 'Ctrl+C' },
    { icon: 'cut', label: '剪切(T)', keys: 'Ctrl+X' },
    { icon: 'pasteSmall', label: '粘贴(P)', keys: 'Ctrl+V' },
    { icon: 'pasteSpecial', label: '选择性粘贴(S)...' },
  ],
  [
    {
      icon: 'brush',
      label: '格式刷(O)',
      extra: (
        <span className="ml-auto flex h-4 items-center border-l border-[#d5d8dd] pl-2.5">
          <Icon name="brushes" />
        </span>
      ),
    },
  ],
  [
    { label: '删除(D)' },
    { icon: 'clear', label: '清除内容(N)', extra: submenuArrow },
  ],
  [
    {
      icon: 'rowHeight',
      label: '行高(R)...',
      extra: (
        <span className="ml-auto flex h-4 items-center gap-2 border-l border-[#d5d8dd] pl-2.5">
          <Icon name="fitHeight" />
          最适合的行高
        </span>
      ),
    },
    { label: '隐藏(H)' },
    { label: '取消隐藏(U)', active: true },
    { icon: 'cellFormat', label: '设置单元格格式(F)...', keys: 'Ctrl+1' },
  ],
  [{ icon: 'filterCol', label: '筛选列(L)...' }],
  [{ icon: 'beautify', label: '表格整理美化' }],
  [
    { icon: 'exportImg', label: '输出单元格为图片', extra: <Icon name="crown" className="ml-2" /> },
    { label: '批量处理单元格(Q)', extra: submenuArrow },
  ],
];

const ContextMenu = () => (
  <div role="menu" className="absolute top-[253px] left-[31px] w-[253px] bg-white pt-px shadow-[0_0_3px_rgba(60,70,100,0.45)]">
    {menu.map((section, i) => (
      <div key={section[0].label} className={clsx(i > 0 && 'mt-1 border-t border-[#e0e2e8] pt-[3px]')}>
        {section.map(item => (
          <button
            key={item.label}
            type="button"
            role="menuitem"
            className={clsx('flex h-7 w-full items-center pr-[7px] pl-2 whitespace-nowrap', item.active && 'bg-[#e7eaef]')}
          >
            <span className="w-[25px]">{item.icon && <Icon name={item.icon} />}</span>
            {item.label}
            {item.keys && <span className="ml-auto pr-2.5 text-[13px] text-[#8a8d94]">{item.keys}</span>}
            {item.extra}
          </button>
        ))}
      </div>
    ))}
  </div>
);

const Pointer = () => (
  <svg width="13" height="20" viewBox="0 0 13 20" aria-hidden className="absolute top-[546px] left-[242px]">
    <path d="M.5 1V16.5L4 13L6.5 19L9 18L6.5 12H11.5Z" fill="#fff" stroke="#111827" />
  </svg>
);

const Watermark = () => (
  <div className="pointer-events-none absolute right-2.5 bottom-2 flex items-center gap-0.5 opacity-85">
    <svg width="43" height="41" viewBox="0 0 42 40" aria-hidden>
      <defs>
        <linearGradient id="wave" x1="0" y1="1" x2="1" y2="0">
          <stop offset="0" stopColor="#3f6fb8" />
          <stop offset="1" stopColor="#5cc3f0" />
        </linearGradient>
        <linearGradient id="leaf" x1="0" y1="1" x2="1" y2="0">
          <stop offset="0" stopColor="#f4e75a" />
          <stop offset="0.6" stopColor="#5dc46d" />
          <stop offset="1" stopColor="#4cb989" />
        </linearGradient>
      </defs>
      <path d="M41 1C22 0 2 12 0 24C-1 32 5 35 9 33C4 27 9 16 24 9C30 6 36 5 41 1Z" fill="url(#wave)" />
      <path d="M33 9C39 10 42 14 42 21C40 34 18 43 2 38C14 38 26 33 30 25C33 19 33 13 28 10Z" fill="url(#leaf)" />
      <path d="M31 9C20 12 12 18 12 24C12 29 18 29 22 25C20 32 10 34 8 27C6 18 17 10 31 9Z" fill="#4c84c9" />
    </svg>
    <div className="flex flex-col">
      <span className="font-['Noto_Sans_CJK_SC',sans-serif] text-[21px] leading-6 font-bold text-[#5a97d6]">极光下载站</span>
      <span className="font-['Liberation_Sans',sans-serif] text-[17px] leading-4 text-[#4dbd7c]">www.xz7.com</span>
    </div>
  </div>
);

const App = () => (
  <div className="relative flex h-screen flex-col overflow-hidden border-l-2 border-[#c4c6c9] bg-[#f5f7f9] font-['Open_Sans','Noto_Sans_CJK_SC',sans-serif] text-[12px] leading-4 text-[#273044]">
    <div className="z-10 shrink-0 border-b border-[#e0e2e6] bg-white shadow-[0_1px_4px_rgba(0,0,0,0.08)]">
      <TopBar />
      <Ribbon />
    </div>
    <div className="flex min-h-0 flex-1">
      <main className="flex min-w-0 flex-1 flex-col">
        <FormulaBar />
        <div className="flex min-h-0 flex-1">
          <Grid />
          <VerticalScroll />
        </div>
        <SheetBar />
      </main>
      <SideBar />
    </div>
    <StatusBar />
    <MiniToolbar />
    <ContextMenu />
    <Pointer />
    <Watermark />
  </div>
);

export default App;
